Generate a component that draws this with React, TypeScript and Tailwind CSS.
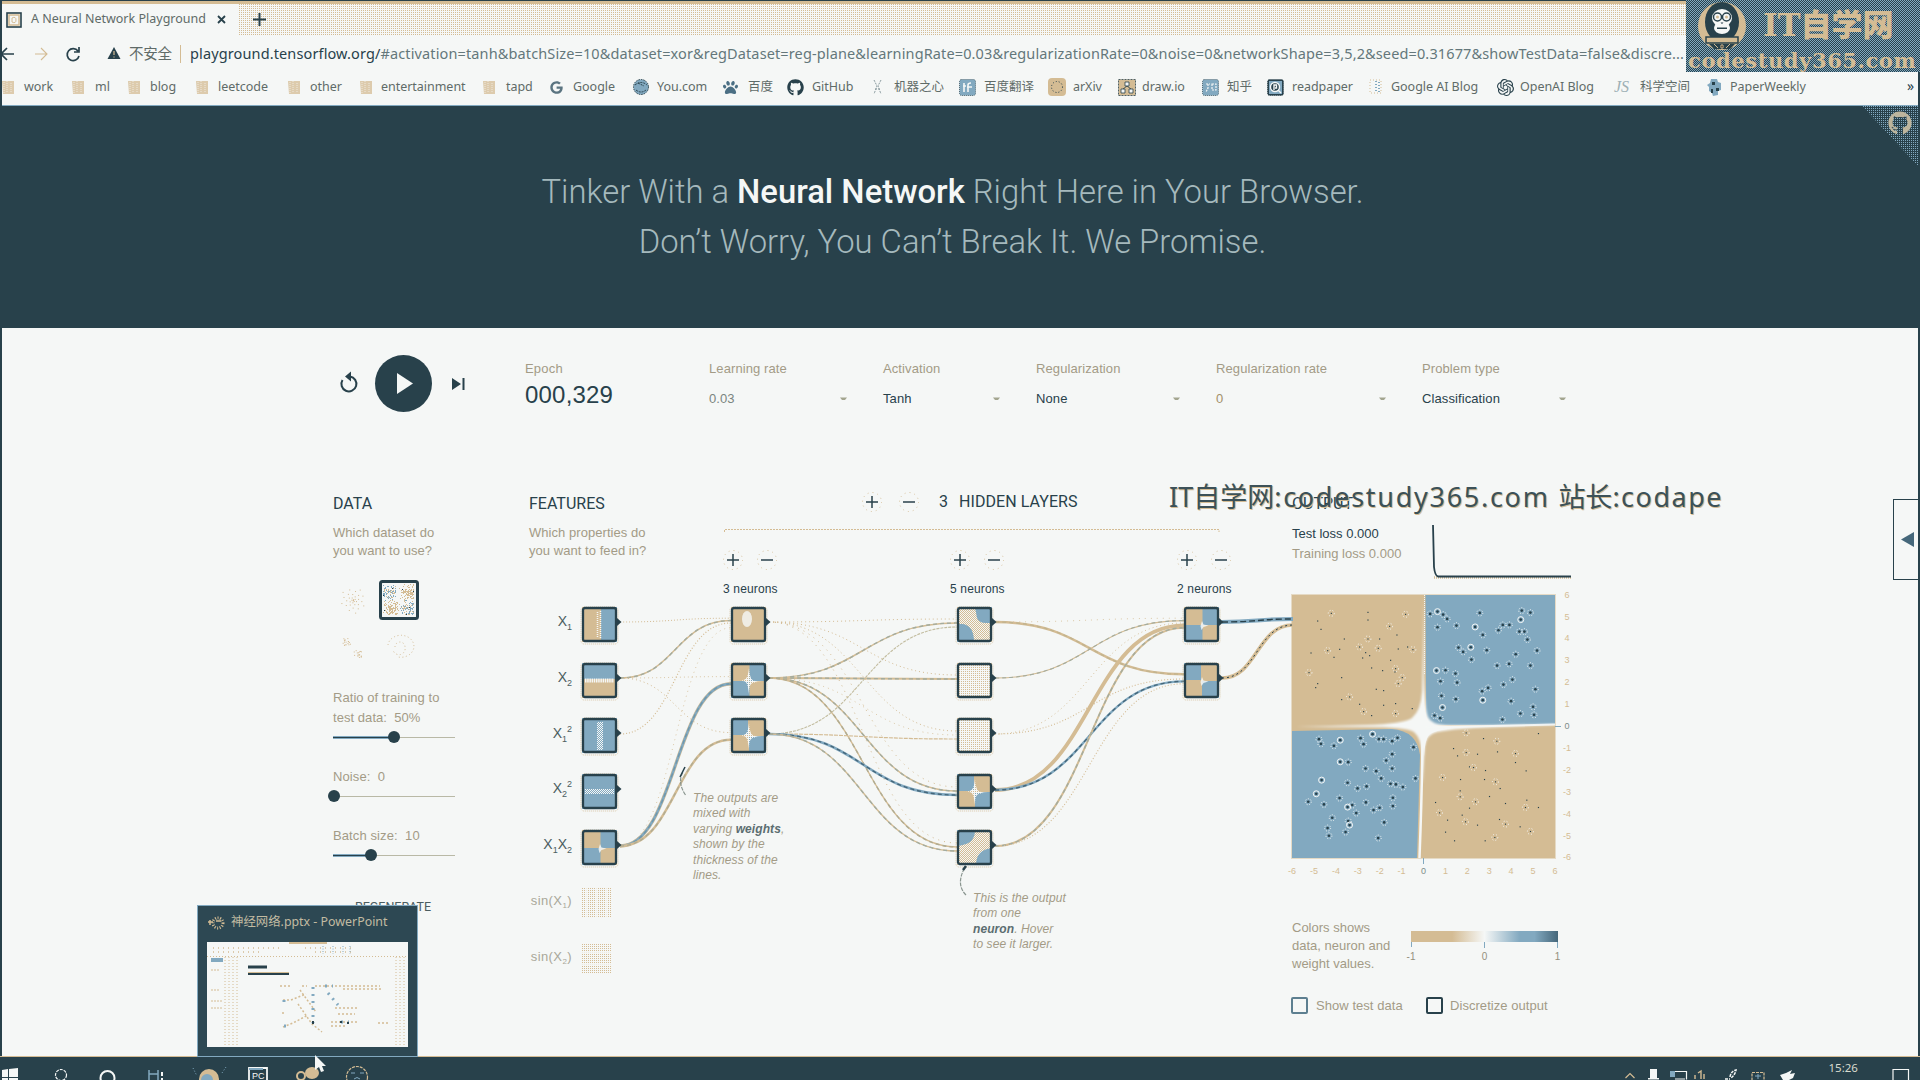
import React from "react";
import { FaGithub, FaPaw, FaGoogle } from "react-icons/fa";
import { SiOpenai } from "react-icons/si";

const DARK = "#28414b";
const TAN = "#d4bc94";
const BLUE = "#82a9c0";
const PALE = "#f5f7f6";

const UI = "font-['Noto_Sans','Noto_Sans_CJK_SC',sans-serif]";

/* ---------- browser chrome ---------- */

function FolderIcon() {
  return (
    <svg width="13" height="15" viewBox="0 0 13 15">
      <path d="M0 1h12v13H1z" fill={TAN} opacity="0.75" />
      <path d="M2 2v11M5 1v12M9 3v10" stroke={PALE} strokeWidth="0.7" strokeDasharray="1 1" />
    </svg>
  );
}

function SquareIcon({ fill, children }: { fill: string; children?: React.ReactNode }) {
  return (
    <svg width="17" height="17" viewBox="0 0 17 17">
      <rect x="0.5" y="0.5" width="16" height="16" rx="2" fill={fill} stroke={DARK} strokeWidth="0.7" strokeDasharray="1 1" />
      {children}
    </svg>
  );
}

const folder = <FolderIcon />;

const bookmarks: { w: string; iw: string; icon: React.ReactNode; label: string }[] = [
  { w: "w-[70px]", iw: "w-[22px]", icon: folder, label: "work" },
  { w: "w-[56px]", iw: "w-[23px]", icon: folder, label: "ml" },
  { w: "w-[68px]", iw: "w-[22px]", icon: folder, label: "blog" },
  { w: "w-[92px]", iw: "w-[22px]", icon: folder, label: "leetcode" },
  { w: "w-[72px]", iw: "w-[22px]", icon: folder, label: "other" },
  { w: "w-[123px]", iw: "w-[21px]", icon: folder, label: "entertainment" },
  { w: "w-[67px]", iw: "w-[23px]", icon: folder, label: "tapd" },
  { w: "w-[83px]", iw: "w-[23px]", icon: <FaGoogle size={13} color="#5a7480" />, label: "Google" },
  {
    w: "w-[90px]", iw: "w-[24px]", label: "You.com",
    icon: (
      <svg width="16" height="16" viewBox="0 0 16 16">
        <circle cx="8" cy="8" r="7.5" fill={BLUE} stroke={DARK} strokeDasharray="1.5 1" />
        <path d="M2 6q6-5 12 0M3 11q5 4 10 0M5 4l6 3" stroke={DARK} fill="none" strokeDasharray="2 1" />
      </svg>
    ),
  },
  { w: "w-[64px]", iw: "w-[25px]", icon: <FaPaw size={15} color="#4b6f84" />, label: "百度" },
  { w: "w-[86px]", iw: "w-[25px]", icon: <FaGithub size={17} color={DARK} />, label: "GitHub" },
  {
    w: "w-[86px]", iw: "w-[21px]", label: "机器之心",
    icon: (
      <svg width="10" height="16" viewBox="0 0 10 16" stroke="#8b9ca0" fill="none">
        <path d="M1 1l3 6-3 8M8 1L5 7l3 8M2 10h6" strokeDasharray="2 1" />
      </svg>
    ),
  },
  {
    w: "w-[89px]", iw: "w-[25px]", label: "百度翻译",
    icon: <SquareIcon fill={BLUE}><path d="M5 4v9M9 13V6q0-2 3-2M8 8h5M4 7h3" stroke={PALE} strokeWidth="1.6" fill="none" /></SquareIcon>,
  },
  {
    w: "w-[70px]", iw: "w-[25px]", label: "arXiv",
    icon: (
      <svg width="18" height="18" viewBox="0 0 18 18">
        <rect width="18" height="18" rx="4" fill={TAN} />
        <circle cx="9" cy="9" r="5.5" fill="none" stroke={DARK} strokeDasharray="1 2" />
      </svg>
    ),
  },
  {
    w: "w-[84px]", iw: "w-[24px]", label: "draw.io",
    icon: (
      <svg width="18" height="17" viewBox="0 0 18 17">
        <rect x="0.5" y="0.5" width="17" height="16" fill={TAN} stroke={DARK} strokeWidth="0.8" strokeDasharray="2 1" />
        <path d="M7 3h4v4H7zM3 10h4v4H3zM11 10h4v4h-4zM9 7L5 10M9 7l4 3" fill={PALE} stroke={DARK} strokeWidth="0.8" />
      </svg>
    ),
  },
  {
    w: "w-[65px]", iw: "w-[25px]", label: "知乎",
    icon: <SquareIcon fill={BLUE}><path d="M4 5h4M6 5v4l-2 4M10 5h4v6h-4z" stroke={PALE} strokeWidth="1.2" fill="none" strokeDasharray="2 1" /></SquareIcon>,
  },
  {
    w: "w-[102px]", iw: "w-[25px]", label: "readpaper",
    icon: <SquareIcon fill={DARK}><rect x="2" y="2" width="13" height="13" fill={BLUE} /><circle cx="8" cy="8" r="4.5" fill={DARK} stroke={PALE} strokeWidth="1.4" /><path d="M7 11V6h2.500v3H8M11 11l3 3" stroke={PALE} strokeWidth="1.4" fill="none" /></SquareIcon>,
  },
  {
    w: "w-[128px]", iw: "w-[22px]", label: "Google AI Blog",
    icon: (
      <svg width="14" height="16" viewBox="0 0 14 16" fill="none" strokeDasharray="1 2">
        <rect x="1" y="1" width="11" height="13" stroke={TAN} />
        <path d="M7 2v12M10 3v10" stroke={BLUE} strokeWidth="2" />
      </svg>
    ),
  },
  { w: "w-[117px]", iw: "w-[23px]", icon: <SiOpenai size={17} color={DARK} />, label: "OpenAI Blog" },
  { w: "w-[93px]", iw: "w-[26px]", icon: <span className="font-['Liberation_Serif'] text-[16px] italic text-[#9db0b5]">JS</span>, label: "科学空间" },
  {
    w: "w-[110px]", iw: "w-[23px]", label: "PaperWeekly",
    icon: (
      <svg width="14" height="17" viewBox="0 0 14 17">
        <path d="M4 0h6l1 3 3 1v7l-3 1v4l-5 1-1-3-3-2V8L0 6l3-2z" fill={BLUE} />
        <path d="M5 3h3v3H5zM9 9h3v3H9zM4 10h2v4H4z" fill={DARK} />
      </svg>
    ),
  },
];

function Toolbar() {
  return (
    <div className="flex h-[38px] items-center">
      <svg width="127" height="20" viewBox="2 0 127 20" fill="none" className="shrink-0">
        <path d="M14 10H1M7 4L1 10l6 6" stroke={DARK} strokeWidth="1.700" />
        <path d="M35 10h12M41 4l6 6-6 6" stroke={TAN} strokeWidth="1.100" />
        <path d="M78 7a6 6 0 1 0 1 5M79 3v5h-5" stroke={DARK} strokeWidth="1.700" />
        <path d="M114 3l6.500 12h-13z" fill={DARK} />
        <path d="M114 7v4M114 12.500v1" stroke={TAN} strokeWidth="1.200" />
      </svg>
      <span className="w-[51px] shrink-0 text-[14.500px] tracking-[-0.2px]">不安全</span>
      <span className="mr-[9px] h-[18px] w-px shrink-0 bg-[#d4bc94]" />
      <span className="w-[1496px] overflow-hidden whitespace-nowrap text-[14.500px] tracking-[0.126px] text-[#64777b]">
        <span className="text-[#28414b]">playground.tensorflow.org/</span>
        #activation=tanh&amp;batchSize=10&amp;dataset=xor&amp;regDataset=reg-plane&amp;learningRate=0.03&amp;regularizationRate=0&amp;noise=0&amp;networkShape=3,5,2&amp;seed=0.31677&amp;showTestData=false&amp;discre...
      </span>
    </div>
  );
}

function Browser() {
  return (
    <header className={"flex h-[106px] shrink-0 flex-col bg-[#f5f7f6] text-[#5f6b68] " + UI}>
      <div className="h-px bg-[#28414b]" />
      <div className="h-[3px] bg-[#d4bc94]" />
      <div className="flex h-[31px]">
        <div className="flex w-[236px] shrink-0 items-center pl-[4px]">
          <svg width="16" height="16" viewBox="0 0 16 16" className="shrink-0">
            <rect x="1" y="1" width="14" height="14" fill={PALE} stroke={DARK} strokeWidth="1.6" />
            <rect x="3" y="3" width="10" height="10" fill="none" stroke={TAN} strokeWidth="1.5" />
            <path d="M6 6q4-2 4 2t-4 2z" fill="none" stroke={TAN} />
          </svg>
          <span className="ml-[9px] w-[186px] shrink-0 whitespace-nowrap text-[12.500px]">A Neural Network Playground</span>
          <svg width="9" height="9" viewBox="0 0 9 9" stroke={DARK} strokeWidth="1.8"><path d="M1 1l7 7M8 1L1 8" /></svg>
        </div>
        <div className="flex grow items-center bg-[conic-gradient(#d4bc94_25%,#f5f7f6_0)] bg-[length:2px_2px] pl-[15px]">
          <svg width="13" height="13" viewBox="0 0 13 13" stroke={DARK} strokeWidth="2"><path d="M6.500 0v13M0 6.500h13" /></svg>
        </div>
      </div>
      <Toolbar />
      <div className="flex h-[28px] items-center text-[12.500px] tracking-[-0.03px]">
        {bookmarks.map((b) => (
          <div key={b.label} className={"flex shrink-0 items-center whitespace-nowrap " + b.w}>
            <span className={"flex shrink-0 items-center " + b.iw}>{b.icon}</span>
            <span>{b.label}</span>
          </div>
        ))}
        <span className="ml-auto pb-[4px] pr-[4px] text-[14px] text-[#28414b]">»</span>
      </div>
      <div className="mt-auto h-px bg-[#82a9c0]" />
    </header>
  );
}

function SiteLogo() {
  return (
    <div className="absolute right-0 top-0 flex h-[72px] w-[234px] flex-col overflow-hidden bg-[repeating-conic-gradient(#28414b_0_25%,#82a9c0_0_50%)] bg-[length:2px_2px] text-[#d4bc94]">
      <div className="flex h-[50px] items-center pl-[11px]">
        <svg width="50" height="50" viewBox="0 0 50 50">
          <ellipse cx="25" cy="26" rx="24" ry="24" fill={TAN} />
          <ellipse cx="25" cy="22" rx="17" ry="20" fill={DARK} />
          <ellipse cx="25" cy="18" rx="10" ry="9" fill={PALE} />
          <ellipse cx="25" cy="28" rx="8" ry="6" fill={PALE} />
          <circle cx="20.500" cy="17" r="4" fill={PALE} stroke={DARK} strokeWidth="1.500" />
          <circle cx="29.500" cy="17" r="4" fill={PALE} stroke={DARK} strokeWidth="1.500" />
          <circle cx="20.500" cy="17" r="1.500" fill={TAN} />
          <circle cx="29.500" cy="17" r="1.500" fill={TAN} />
          <path d="M23.500 22.500h3l-1.500 1.500zM20 27.500h10v1.500H20z" fill={DARK} />
          <path d="M9 37h32v6H9z" fill={TAN} stroke={DARK} strokeWidth="1.500" />
          <path d="M12 44h26l-5 5H17z" fill={DARK} />
          <path d="M17 44l4 4M33 44l-4 4M24 45h2v3h-2z" stroke={TAN} />
        </svg>
        <span className="ml-[16px] whitespace-nowrap font-['DejaVu_Serif','Noto_Sans_CJK_SC',serif] text-[31px] font-black leading-[50px]">IT自学网</span>
      </div>
      <div className="whitespace-nowrap pl-[2px] font-['DejaVu_Serif',serif] text-[21px] font-bold leading-[22px] tracking-[0.600px]">codestudy365.com</div>
    </div>
  );
}

function Banner() {
  return (
    <section className="relative flex h-[222px] shrink-0 flex-col items-center bg-[#28414b] pr-[15px] pt-[61px] font-['Roboto',sans-serif] text-[32.800px] font-light leading-[50px] text-[#a5b9bd]">
      <div className="whitespace-nowrap">Tinker With a <span className="font-medium text-[#f5f7f6]">Neural Network</span> Right Here in Your Browser.</div>
      <div className="whitespace-nowrap">Don’t Worry, You Can’t Break It. We Promise.</div>
      <div className="absolute right-0 top-0 h-[60px] w-[56px]">
        <div className="h-full w-full bg-[conic-gradient(#82a9c0_25%,#28414b_0)] bg-[length:2px_2px] [clip-path:polygon(0_0,100%_0,100%_100%)]" />
        <FaGithub size={24} color="#bdb59d" className="absolute right-[6px] top-[5px]" />
      </div>
    </section>
  );
}

/* ---------- playground ---------- */

const selects = [
  { w: "w-[174px]", cw: "w-[138px]", label: "Learning rate", value: "0.03", cls: "text-[#7a8580]" },
  { w: "w-[153px]", cw: "w-[117px]", label: "Activation", value: "Tanh", cls: "text-[#28414b]" },
  { w: "w-[180px]", cw: "w-[144px]", label: "Regularization", value: "None", cls: "text-[#28414b]" },
  { w: "w-[206px]", cw: "w-[170px]", label: "Regularization rate", value: "0", cls: "text-[#a3906a]" },
  { w: "w-[160px]", cw: "w-[144px]", label: "Problem type", value: "Classification", cls: "text-[#28414b]" },
];

function Controls() {
  return (
    <div className="flex h-[66px] shrink-0 items-center">
      <svg width="195" height="66" viewBox="330 350 195 66" className="shrink-0">
        <path d="M342.500 380A7.500 7.500 0 1 0 350 376.500" fill="none" stroke={DARK} strokeWidth="2" />
        <path d="M351 371.500v10l-6-5z" fill={DARK} />
        <circle cx="403.500" cy="383.500" r="28.500" fill={DARK} />
        <path d="M397 373v21l16-10.500z" fill={PALE} />
        <path d="M452 378v12l9-6zM462.500 378h2v12h-2z" fill={DARK} />
      </svg>
      <div className="w-[184px] shrink-0 pt-[4px]">
        <div className="text-[13px] leading-[16px] tracking-[0.200px]">Epoch</div>
        <div className="mt-[4px] text-[24px] leading-[28px] tracking-[0.200px] text-[#28414b]">000,329</div>
      </div>
      {selects.map((s) => (
        <div key={s.label} className={"h-[48px] shrink-0 pt-[2px] text-[13px] " + s.w}>
          <div className="whitespace-nowrap leading-[16px] tracking-[0.100px]">{s.label}</div>
          <div className={"mt-[14px] flex items-center justify-between leading-[16px] tracking-[0.100px] " + s.cw + " " + s.cls}>
            <span>{s.value}</span>
            <svg width="7" height="4" viewBox="0 0 7 4"><path d="M0 0.500h7l-2 2.500h-3z" fill="#a3a58f" /></svg>
          </div>
        </div>
      ))}
    </div>
  );
}

const scatter = (n: number, fn: (i: number) => [number, number]) => Array.from({ length: n }, (_, i) => fn(i));
const noise = (i: number) => {
  const v = Math.sin(i * 127.1 + 11.7) * 43758.5453;
  return v - Math.floor(v);
};

const XOR_CENTERS: [number, number][] = [[29, 12], [12, 27], [10, 12], [29, 28]];

function Slider({ fill, at }: { fill: string; at: string }) {
  return (
    <div className="relative mt-[3px] flex h-[12px] w-[122px] items-center">
      <div className={"h-[3px] border-y border-[#82a9c0] bg-[#28414b] " + fill} />
      <div className="h-px grow bg-[#b9b9a6]" />
      <div className={"absolute top-0 h-[12px] w-[12px] rounded-full bg-[#28414b] " + at} />
    </div>
  );
}

function DataColumn() {
  return (
    <div className="w-[195px] shrink-0 pt-[14px] text-[13px]">
      <h2 className="font-['Roboto',sans-serif] text-[16px] leading-[20px] text-[#28414b]">DATA</h2>
      <p className="mt-[10px] leading-[18px] tracking-[0.050px]">Which dataset do<br />you want to use?</p>
      <div className="-ml-px mt-[20px] grid w-[88px] grid-cols-[40px_40px] gap-[7px]">
        <svg width="40" height="40" viewBox="0 0 40 40" fill={TAN}>
          {scatter(34, (i) => [21 + Math.cos(i * 2.4) * i * 0.4, 20 + Math.sin(i * 2.4) * i * 0.4]).map(([x, y], i) => (
            <rect key={i} x={x} y={y} width="1" height="1" />
          ))}
        </svg>
        <svg width="40" height="40" viewBox="0 0 40 40">
          <rect x="1.500" y="1.500" width="37" height="37" rx="2" fill={PALE} stroke={DARK} strokeWidth="3" />
          {scatter(420, (i) => {
            const c = XOR_CENTERS[i % 4];
            return [c[0] + (noise(i) + noise(i + 77) - 1) * 9, c[1] + (noise(i + 500) + noise(i + 900) - 1) * 9];
          }).map(([x, y], i) => (
            <rect
              key={i}
              x={Math.round(Math.min(34, Math.max(4, x)))}
              y={Math.round(Math.min(34, Math.max(4, y)))}
              width="1"
              height="1"
              fill={i % 53 === 0 ? DARK : i % 4 < 2 || i % 3 === 0 ? TAN : i % 5 === 0 ? PALE : BLUE}
            />
          ))}
        </svg>
        <svg width="40" height="40" viewBox="0 0 40 40" fill={TAN}>
          {scatter(34, (i) => [(i % 2 ? 12 : 23) + noise(i) * 8 - 2, (i % 2 ? 12 : 24) + noise(i + 90) * 7 - 1]).map(([x, y], i) => (
            <rect key={i} x={x} y={y} width="1" height="1" />
          ))}
        </svg>
        <svg width="40" height="40" viewBox="0 0 40 40" fill="none" stroke={TAN} strokeDasharray="1 2.500">
          <path d="M9 18a13 11 0 1 1 10 12M16 20a5 5 0 0 1 10 0 6 6 0 0 1-12 3" />
        </svg>
      </div>
      <p className="mt-[21px] leading-[20px] tracking-[0.050px]">Ratio of training to<br />test data:&nbsp; 50%</p>
      <Slider fill="w-[61px]" at="left-[55px]" />
      <p className="mt-[24px] leading-[20px] tracking-[0.100px]">Noise:&nbsp; 0</p>
      <Slider fill="w-0" at="-left-[5px]" />
      <p className="mt-[24px] leading-[20px] tracking-[0.100px]">Batch size:&nbsp; 10</p>
      <Slider fill="w-[38px]" at="left-[32px]" />
      <div className="ml-[5px] mt-[34px] w-[110px] text-center font-['Roboto',sans-serif] text-[12.500px] leading-[24px] text-[#4b5d60]">REGENERATE</div>
    </div>
  );
}

type Fill = "x" | "y" | "x2" | "y2" | "xor" | "rox" | "blob" | "mixA" | "mixB" | "faint";

function Star({ small }: { small?: boolean }) {
  return small ? (
    <path d="M18 14l1.500 3.500 5 1-5 1.500-2 3-1-4z" fill={PALE} opacity="0.85" />
  ) : (
    <path d="M18 5q0.500 9 3 11.500T31 18.500Q22 19 20 21t-2 10Q17 23 15.500 20T6 18q7-0.500 9-2.500T18 5z" fill="url(#starDots)" />
  );
}

function NodeBox({ x, y, kind, small }: { x: number; y: number; kind: Fill; small?: boolean }) {
  return (
    <g transform={`translate(${x} ${y})`}>
      <rect x="-1" y="0" width="37" height="37" rx="3" fill="none" stroke={TAN} strokeWidth="0.800" strokeDasharray="1 1" />
      {kind === "x" && <><rect width="35" height="35" fill={TAN} /><rect x="19" width="16" height="35" fill={BLUE} /><path d="M15.500 5v26M18.500 4v27" stroke={PALE} strokeWidth="1.500" strokeDasharray="1 1" /></>}
      {kind === "y" && <><rect width="35" height="35" fill={TAN} /><rect width="35" height="16" fill={BLUE} /><path d="M3 16.500h29M3 18.500h29" stroke={PALE} strokeWidth="1.800" strokeDasharray="1.500 0.700" /></>}
      {kind === "x2" && <><rect width="35" height="35" fill={BLUE} /><path d="M15 4h6v28h-6z" fill="url(#dither)" /></>}
      {kind === "y2" && <><rect width="35" height="35" fill={BLUE} /><path d="M3 15h29v5H3z" fill="url(#dither)" /></>}
      {kind === "xor" && <><rect width="35" height="35" fill={TAN} /><path d="M18.500 0H35v18H18.500zM0 18h18.500v17H0z" fill={BLUE} /></>}
      {kind === "rox" && <><rect width="35" height="35" fill={TAN} /><path d="M0 0h17v17H0zM18 18h17v17H18z" fill={BLUE} /></>}
      {kind === "blob" && <><rect width="35" height="35" fill={TAN} /><ellipse cx="16" cy="12" rx="5" ry="8" fill={PALE} opacity="0.8" /></>}
      {kind === "mixA" && <><rect width="35" height="35" fill="url(#speck)" /><path d="M18 0H35v16h-6q-7 0-9-5zM0 17h6q11 2 11 18H0z" fill={BLUE} /></>}
      {kind === "mixB" && <><rect width="35" height="35" fill="url(#speck)" /><path d="M0 0h18q0 8-5 12-5 3-13 4zM35 18v17H19q0-15 16-17z" fill={BLUE} /></>}
      {kind === "faint" && <rect width="35" height="35" fill="url(#speckLight)" />}
      {(kind === "xor" || kind === "rox") && <Star small={small} />}
      <rect x="1" y="1" width="33" height="33" rx="2" fill="none" stroke={DARK} strokeWidth="2.300" />
      <path d="M35 11l4.500 4-4.500 4z" fill={DARK} />
    </g>
  );
}

const ROWS = [622, 678, 734, 790, 846];
const COLS = [582, 731, 957, 1184];
const OFFS: Record<number, number> = { 5: 2.4, 3: 4 };

function Link({ c, from, to, n, color, w, dash, over }: { c: number; from: number; to: number; n: number; color: string; w: number; dash?: string; over?: string }) {
  const x1 = COLS[c] + 38;
  const y1 = ROWS[from];
  const x2 = COLS[c + 1];
  const y2 = ROWS[to] + (from - (n - 1) / 2) * OFFS[n] + 1;
  const m = (x1 + x2) / 2;
  const d = `M${x1} ${y1}C${m} ${y1} ${m} ${y2} ${x2} ${y2}`;
  return (
    <>
      <path d={d} fill="none" stroke={color} strokeWidth={w} strokeDasharray={dash} />
      {over && <path d={d} fill="none" stroke={over} strokeWidth={Math.min(w, 1.4)} strokeDasharray="4 3" />}
    </>
  );
}

const dot = "1 3";

function Links() {
  return (
    <g>
      <Link c={0} from={0} to={0} n={5} color={TAN} w={1} dash="1 2" />
      <Link c={0} from={1} to={0} n={5} color={TAN} w={1.5} over="#a3ac9f" />
      <Link c={0} from={2} to={0} n={5} color={TAN} w={1.2} dash="1 2" />
      <Link c={0} from={4} to={0} n={5} color={TAN} w={0.8} dash="1 4" />
      <Link c={0} from={1} to={1} n={5} color={TAN} w={0.8} dash={dot} />
      <Link c={0} from={1} to={2} n={5} color={TAN} w={1} dash={dot} />
      <Link c={0} from={4} to={1} n={5} color={TAN} w={3.4} />
      <Link c={0} from={4} to={1} n={5} color={BLUE} w={2.4} over="#6f97ab" />
      <Link c={0} from={4} to={2} n={5} color={TAN} w={2.4} over="#b0ac92" />

      {[0, 1, 2, 3, 4].map((t) => (
        <Link key={t} c={1} from={0} to={t} n={3} color={TAN} w={1} dash={t > 2 ? "1 5" : dot} />
      ))}
      <Link c={1} from={1} to={0} n={3} color={TAN} w={1.5} over="#a3ac9f" />
      <Link c={1} from={1} to={1} n={3} color={TAN} w={1.8} over="#a3ac9f" />
      <Link c={1} from={1} to={2} n={3} color={TAN} w={0.8} dash="1 4" />
      <Link c={1} from={1} to={3} n={3} color={TAN} w={1.4} over="#a3ac9f" />
      <Link c={1} from={1} to={4} n={3} color={TAN} w={1.4} over="#b0ac92" />
      <Link c={1} from={2} to={0} n={3} color="#c3bda0" w={1.1} dash="3 1" />
      <Link c={1} from={2} to={2} n={3} color={TAN} w={1.2} dash="4 1" />
      <Link c={1} from={2} to={3} n={3} color={BLUE} w={2.6} over="#45677a" />
      <Link c={1} from={2} to={4} n={3} color={TAN} w={1.4} over="#a3ac9f" />

      <Link c={2} from={0} to={0} n={5} color={TAN} w={0.8} dash="1 5" />
      <Link c={2} from={0} to={1} n={5} color={TAN} w={2.4} over="#c2b48f" />
      <Link c={2} from={1} to={0} n={5} color={TAN} w={1.1} over="#a3ac9f" />
      <Link c={2} from={2} to={0} n={5} color={TAN} w={0.9} dash={dot} />
      <Link c={2} from={2} to={1} n={5} color={TAN} w={1.1} dash="1 2" />
      <Link c={2} from={3} to={0} n={5} color={TAN} w={3.8} />
      <Link c={2} from={3} to={1} n={5} color={BLUE} w={2.4} over="#45677a" />
      <Link c={2} from={4} to={0} n={5} color={TAN} w={2} over="#a3ac9f" />
      <Link c={2} from={4} to={1} n={5} color={TAN} w={1.1} dash="1 2" />

      <path d="M1222 622C1257 622 1257 619 1293 619" fill="none" stroke={BLUE} strokeWidth="4" />
      <path d="M1222 622C1257 622 1257 619 1293 619" fill="none" stroke={DARK} strokeWidth="1.400" strokeDasharray="6 3" />
      <path d="M1222 678C1257 678 1257 625 1293 625" fill="none" stroke={TAN} strokeWidth="3.600" />
      <path d="M1222 678C1257 678 1257 625 1293 625" fill="none" stroke={DARK} strokeWidth="1" strokeDasharray="2 3" />
    </g>
  );
}

function PlusMinus({ gap }: { gap: string }) {
  return (
    <span className={"flex " + gap}>
      <svg width="22" height="22" viewBox="-11 -11 22 22">
        <circle r="9.500" fill="none" stroke={TAN} strokeWidth="0.900" strokeDasharray="1 4" />
        <path d="M-6 0H6M0-6V6" stroke={DARK} strokeWidth="1.500" />
      </svg>
      <svg width="22" height="22" viewBox="-11 -11 22 22">
        <circle r="9.500" fill="none" stroke={TAN} strokeWidth="0.900" strokeDasharray="1 4" />
        <path d="M-6 0H6" stroke={DARK} strokeWidth="1.500" />
      </svg>
    </span>
  );
}

function FeatureLabel({ y, children }: { y: number; children: React.ReactNode }) {
  return <text x="572" y={y} textAnchor="end">{children}</text>;
}

function Network() {
  return (
    <div className="relative h-[510px] w-[764px] shrink-0">
      <svg width="764" height="510" viewBox="528 480 764 510" className="absolute left-0 top-0 overflow-visible">
        <defs>
          <pattern id="dither" width="2" height="2" patternUnits="userSpaceOnUse"><rect width="2" height="2" fill={BLUE} /><path d="M0 0h1v1H0zM1 1h1v1H1z" fill={PALE} /></pattern>
          <pattern id="starDots" width="2" height="2" patternUnits="userSpaceOnUse"><path d="M0 0h2v1H0zM1 1h1v1H1z" fill={PALE} /></pattern>
          <pattern id="speck" width="2" height="2" patternUnits="userSpaceOnUse"><rect width="2" height="2" fill={PALE} /><path d="M0 0h1v1H0zM1 1h1v1H1z" fill={TAN} /></pattern>
          <pattern id="speckLight" width="2" height="2" patternUnits="userSpaceOnUse"><rect width="2" height="2" fill={PALE} /><path d="M0 0h1v1H0z" fill={TAN} /></pattern>
        </defs>
        <path d="M724.500 532v-2.500h494.500v2.500" fill="none" stroke={TAN} strokeDasharray="2 1" />
        <Links />
        <NodeBox x={582} y={607} kind="x" />
        <NodeBox x={582} y={663} kind="y" />
        <NodeBox x={582} y={718} kind="x2" />
        <NodeBox x={582} y={774} kind="y2" />
        <NodeBox x={582} y={830} kind="xor" small />
        <NodeBox x={731} y={607} kind="blob" />
        <NodeBox x={731} y={663} kind="xor" />
        <NodeBox x={731} y={718} kind="rox" />
        <NodeBox x={957} y={607} kind="mixA" />
        <NodeBox x={957} y={663} kind="faint" />
        <NodeBox x={957} y={718} kind="faint" />
        <NodeBox x={957} y={774} kind="rox" />
        <NodeBox x={957} y={830} kind="mixB" />
        <NodeBox x={1184} y={607} kind="xor" small />
        <NodeBox x={1184} y={663} kind="rox" small />
        <rect x="582" y="887" width="30" height="30" fill="url(#speckLight)" />
        <rect x="582" y="943" width="30" height="30" fill="url(#speckLight)" />
        <path d="M587 886v32M597 886v32M607 886v32M581 952h32M581 965h32" stroke={PALE} strokeWidth="1.500" />
        <g fontSize="14" fill="#4b5d60" className="font-['Liberation_Sans',sans-serif]">
          <FeatureLabel y={626}>X<tspan fontSize="9" dy="4">1</tspan></FeatureLabel>
          <FeatureLabel y={682}>X<tspan fontSize="9" dy="4">2</tspan></FeatureLabel>
          <FeatureLabel y={738}>X<tspan fontSize="9" dy="4">1</tspan><tspan fontSize="9" dy="-10">2</tspan></FeatureLabel>
          <FeatureLabel y={793}>X<tspan fontSize="9" dy="4">2</tspan><tspan fontSize="9" dy="-10">2</tspan></FeatureLabel>
          <FeatureLabel y={849}>X<tspan fontSize="9" dy="4">1</tspan><tspan dy="-4">X</tspan><tspan fontSize="9" dy="4">2</tspan></FeatureLabel>
          <g fill="#a9a799" fontSize="13" letterSpacing="0.4">
            <FeatureLabel y={905}>sin(X<tspan fontSize="8" dy="3">1</tspan><tspan dy="-3">)</tspan></FeatureLabel>
            <FeatureLabel y={961}>sin(X<tspan fontSize="8" dy="3">2</tspan><tspan dy="-3">)</tspan></FeatureLabel>
          </g>
        </g>
        <g fill="none" stroke="#8a9690" strokeWidth="1.200">
          <path d="M685.500 795Q677 782 683 772" strokeDasharray="4 1" />
          <path d="M680 777l5-10" stroke={DARK} strokeWidth="1.600" />
          <path d="M966 895Q956 885 964 869" strokeDasharray="4 1" />
          <path d="M963 870l3-4" stroke={DARK} strokeWidth="2.500" />
        </g>
      </svg>

      <div className="relative flex pt-[14px]">
        <div className="w-[195px] shrink-0 pl-px text-[13px]">
          <h2 className="font-['Roboto',sans-serif] text-[16px] leading-[20px] text-[#28414b]">FEATURES</h2>
          <p className="mt-[10px] leading-[18px] tracking-[0.050px]">Which properties do<br />you want to feed in?</p>
        </div>
        <div className="w-[569px] shrink-0 text-[#28414b]">
          <div className="-mt-[3px] flex h-[22px] items-center pl-[138px] font-['Roboto',sans-serif] text-[16px]">
            <PlusMinus gap="gap-[15px]" />
            <span className="ml-[19px] w-[20px]">3</span>
            <span className="whitespace-nowrap tracking-[0.060px]">HIDDEN LAYERS</span>
          </div>
          <div className="mt-[36px] flex">
            {["3 neurons", "5 neurons", "2 neurons"].map((t) => (
              <div key={t} className="w-[227px] shrink-0">
                <div className="-ml-px"><PlusMinus gap="gap-[12px]" /></div>
                <div className="mt-[9px] text-[12px] leading-[18px] tracking-[0.150px]">{t}</div>
              </div>
            ))}
          </div>
        </div>
      </div>

      <p className="absolute left-[165px] top-[311px] whitespace-nowrap text-[12px] italic leading-[15.400px] tracking-[0.080px]">
        The outputs are<br />mixed with<br />varying <b className="text-[#5b6d70]">weights</b>,<br />shown by the<br />thickness of the<br />lines.
      </p>
      <p className="absolute left-[445px] top-[411px] whitespace-nowrap text-[12px] italic leading-[15.400px] tracking-[0.080px]">
        This is the output<br />from one<br /><b className="text-[#5b6d70]">neuron</b>. Hover<br />to see it larger.
      </p>
    </div>
  );
}

const bluePoints: [number, number][] = [
  [532, 124], [549, 133], [561, 146], [510, 131], [532, 171], [589, 166], [659, 128], [645, 170], [668, 194], [728, 164], [748, 164], [715, 180], [785, 121], [811, 127], [782, 148], [778, 184], [793, 184], [802, 208], [831, 241], [767, 252], [680, 240], [632, 231], [595, 232], [609, 245], [634, 268], [711, 286], [747, 281], [811, 286], [529, 301], [556, 300], [586, 310], [541, 333], [591, 337], [544, 377], [587, 387], [547, 412], [523, 436], [540, 444], [730, 343], [757, 328], [684, 353], [666, 363], [668, 390], [753, 393], [826, 357], [781, 430], [819, 410], [822, 434], [727, 448],
  [337, 492], [356, 507], [370, 507], [412, 503], [396, 513], [301, 504], [310, 522], [240, 510], [176, 507], [182, 521], [221, 527], [460, 531], [396, 552], [378, 571], [240, 575], [264, 576], [316, 595], [348, 603], [396, 595], [363, 625], [466, 625], [184, 630], [262, 638], [319, 649], [292, 655], [391, 641], [407, 643], [428, 651], [168, 671], [238, 684], [144, 695], [191, 703], [398, 683], [398, 708], [317, 697], [262, 711], [276, 705], [340, 720], [358, 713], [288, 729], [216, 743], [264, 753], [268, 765], [256, 786], [372, 757], [202, 774], [206, 797], [354, 804],
];
const tanPoints: [number, number][] = [
  [213, 129], [323, 126], [323, 149], [436, 132], [172, 152], [182, 177], [388, 168], [410, 194], [252, 206], [323, 206], [358, 206], [152, 248], [202, 241], [238, 237], [221, 261], [298, 230], [316, 247], [328, 256], [354, 234], [414, 236], [442, 230], [458, 238], [391, 270], [307, 263], [146, 307], [334, 293], [367, 301], [406, 295], [404, 305], [244, 322], [426, 322], [172, 340], [166, 352], [414, 340], [348, 357], [370, 361], [268, 380], [244, 388], [298, 402], [310, 424], [370, 405], [406, 400], [406, 430], [456, 415], [334, 436],
  [618, 488], [835, 490], [670, 505], [710, 513], [580, 535], [592, 557], [618, 547], [652, 552], [712, 545], [766, 550], [766, 577], [628, 590], [640, 592], [676, 601], [798, 602], [547, 622], [601, 628], [673, 628], [706, 635], [720, 655], [600, 662], [600, 680], [688, 679], [526, 697], [646, 695], [736, 700], [800, 690], [796, 712], [835, 712], [628, 714], [538, 728], [606, 735], [562, 750], [616, 755], [652, 765], [718, 748], [736, 762], [780, 770], [556, 786], [811, 784], [583, 812], [675, 812], [704, 802],
];

function Heatmap() {
  const ticks = [-6, -5, -4, -3, -2, -1, 0, 1, 2, 3, 4, 5, 6];
  return (
    <svg width="300" height="300" viewBox="1285 585 300 300" className="-ml-[7px] block">
      <defs>
        <filter id="soft" x="-20%" y="-20%" width="140%" height="140%"><feGaussianBlur stdDeviation="1.200" /></filter>
        <clipPath id="area"><rect x="1292" y="595" width="263" height="263" /></clipPath>
      </defs>
      <g clipPath="url(#area)">
        <rect x="1292" y="595" width="263" height="263" fill={TAN} />
        <path d="M1425.500 595H1555v130H1432q-5-3-6-12z" fill={BLUE} />
        <path d="M1292 731l100-2q25 2 28 26l-3 103h-125z" fill={BLUE} />
        <path d="M1424 596q-1 60-2 96-1 18-10 26-9 6-46 7l-70 2h70q40 0 48 5 7 6 8 22l1 30q1-30 2-38 2-12 12-14 16-3 38-4l80-3v-1q-80 2-110 1-14-1-17-8-3-8-4-40z" fill={PALE} filter="url(#soft)" />
        <path d="M1423 690q0 20-7 28-6 6-30 7 26 0 32 6 6 8 6 26 1-18 5-22 5-5 27-7-22 1-27-5-5-6-6-33z" fill={PALE} />
        <path d="M1419.500 858q3-80 3-130" fill="none" stroke={PALE} strokeWidth="2.500" />
        <path d="M1425 727.500l130-3" fill="none" stroke={PALE} strokeWidth="2" opacity="0.9" />
        <path d="M1424.500 595v80" fill="none" stroke={PALE} strokeWidth="1" strokeDasharray="1 1" />
      </g>
      <rect x="1291.500" y="594.500" width="264" height="264" fill="none" stroke={TAN} strokeDasharray="1 1" />
      <path d="M1423.500 858v6M1555 726.500h6" stroke={BLUE} />
      <g transform="translate(1260.330 570.330) scale(0.333)">
        {bluePoints.map(([x, y], i) => (
          <g key={i}>
            <circle cx={x} cy={y} r="9" fill="none" stroke={PALE} strokeWidth="3" strokeDasharray={i % 7 === 0 ? undefined : "3 5"} />
            <circle cx={x} cy={y} r="4" fill={DARK} />
          </g>
        ))}
        {tanPoints.map(([x, y], i) => (
          <g key={i}>
            <rect x={x - 1.5} y={y - 1.5} width="3.500" height="3.500" fill={DARK} />
            {i % 3 === 0 && <circle cx={x} cy={y} r="9" fill="none" stroke={PALE} strokeWidth="3" strokeDasharray="3 6" />}
          </g>
        ))}
      </g>
      <g fontSize="9" textAnchor="middle" className="font-['Liberation_Sans',sans-serif]">
        {ticks.map((t) => (
          <React.Fragment key={t}>
            <text x={1423.5 + t * 21.9} y="873.500" fill={t === 0 ? "#7d8c88" : TAN}>{t}</text>
            <text x="1567" y={729 - t * 21.9} fill={t === 0 ? "#7d8c88" : TAN}>{t}</text>
          </React.Fragment>
        ))}
      </g>
    </svg>
  );
}

function OutputColumn() {
  return (
    <div className="w-[300px] shrink-0 pt-[14px] text-[13px]">
      <h2 className="font-['Roboto',sans-serif] text-[16px] leading-[20px] text-[#28414b]">OUTPUT</h2>
      <div className="mt-[10px] flex h-[61px]">
        <div className="w-[138px] shrink-0 whitespace-nowrap leading-[20px]">
          <div className="text-[#28414b]">Test loss 0.000</div>
          <div>Training loss 0.000</div>
        </div>
        <svg width="145" height="61" viewBox="1430 524 145 61" fill="none">
          <path d="M1434 577.500h137" stroke={TAN} strokeWidth="2.500" strokeDasharray="1 1" />
          <path d="M1433 525l1 42q1 9 4 9.500h133" stroke={DARK} strokeWidth="1.800" />
        </svg>
      </div>
      <Heatmap />
      <div className="mt-[34px] flex">
        <p className="w-[113px] shrink-0 whitespace-nowrap leading-[18px]">Colors shows<br />data, neuron and<br />weight values.</p>
        <svg width="165" height="54" viewBox="1405 919 165 54" className="font-['Liberation_Sans',sans-serif]">
          <defs>
            <linearGradient id="scale">
              <stop offset="0" stopColor={TAN} /><stop offset="0.280" stopColor={TAN} /><stop offset="0.500" stopColor={PALE} />
              <stop offset="0.740" stopColor={BLUE} /><stop offset="0.840" stopColor={BLUE} /><stop offset="1" stopColor="#45677a" />
            </linearGradient>
          </defs>
          <rect x="1411" y="931" width="147" height="11" fill="url(#scale)" />
          <path d="M1411.500 942v5M1484.500 942v6M1557.500 942v6" stroke={BLUE} />
          <g fontSize="10" textAnchor="middle" fill="#948f7c"><text x="1411" y="960">-1</text><text x="1484.500" y="960">0</text><text x="1557.500" y="960">1</text></g>
        </svg>
      </div>
      <div className="-ml-px mt-[24px] flex h-[17px] items-center whitespace-nowrap tracking-[0.050px]">
        <span className="h-[17px] w-[17px] rounded-[2px] border-2 border-[#5d7f90]" />
        <span className="ml-[8px] w-[110px]">Show test data</span>
        <span className="h-[17px] w-[17px] rounded-[2px] border-2 border-[#28414b]" />
        <span className="ml-[7px]">Discretize output</span>
      </div>
    </div>
  );
}

/* ---------- desktop ---------- */

function Preview() {
  return (
    <div className={"absolute left-[197px] top-[905px] flex h-[152px] w-[221px] flex-col border border-[#82a9c0] bg-[#2d4853] px-[9px] " + UI}>
      <div className="flex h-[36px] items-center pb-[3px]">
        <svg width="18" height="18" viewBox="0 0 18 18">
          <circle cx="11" cy="9" r="5" fill="none" stroke={TAN} strokeWidth="3" strokeDasharray="1 1.500" />
          <path d="M1 8h5M3 6v5M9 7h5" stroke={TAN} strokeWidth="1.500" />
        </svg>
        <span className="ml-[6px] whitespace-nowrap text-[12.400px] text-[#c2bba2]">神经网络.pptx - PowerPoint</span>
      </div>
      <svg width="201" height="105" viewBox="207 942 201 105">
        <rect x="207" y="942" width="201" height="105" fill={PALE} />
        <path d="M289 942h38" stroke={TAN} strokeWidth="4" />
        <path d="M207 956.500h201M225 957v88M229 957v88M233 957v88M237 957v88M396 957v88M400 957v88M404 957v88" stroke={TAN} strokeWidth="1" strokeDasharray="1 2" />
        <path d="M213 948h70M213 952h50M305 948h50M315 952h38" stroke={TAN} strokeWidth="1.500" strokeDasharray="1 4" />
        <path d="M323 946v8M333 946v8M343 946v8M350 946v8" stroke={BLUE} strokeDasharray="1 1.500" />
        <path d="M211 960h12" stroke={BLUE} strokeWidth="4" />
        <path d="M248 967h19" stroke={DARK} strokeWidth="3" />
        <path d="M248 974h41" stroke={DARK} strokeWidth="2" />
        <path d="M248 972.500h41" stroke={TAN} />
        <path d="M211 1001h12M211 1008h12M211 990h8M211 970h8" stroke={TAN} strokeDasharray="2 1" />
        <g stroke={TAN} fill="none" strokeDasharray="2 2">
          <path d="M280 986h12M302 986h5M315 986h65M343 989h40M283 1000h8l15-6M282 1013h4M283 1027l10-4 15-8M298 1004l14 20 10 8M300 990l16 22M335 1008h22M338 1014h17M331 1022h28M331 1026h16M378 1023h12" strokeWidth="1.500" />
        </g>
        <path d="M313 987v36M328 993l10 12M325 986h8M284 1000v2M284 1026h3M341 1022h8" stroke={BLUE} strokeWidth="3" strokeDasharray="2 5" />
        <path d="M313 1021v3M340 1022h2M347 1023h2" stroke={DARK} strokeWidth="2" />
      </svg>
    </div>
  );
}

function Taskbar() {
  return (
    <footer className="flex h-[24px] shrink-0 border-t border-[#d4bc94] bg-[#28414b]">
      <svg width="400" height="23" viewBox="0 1057 400 23" className="shrink-0" fill="none">
        <path d="M2 1070l6-1v8H2zM9 1069l9-1v9H9zM2 1078h6v2H2zM9 1078h9v2H9z" fill={PALE} />
        <circle cx="61" cy="1075" r="5.500" stroke={PALE} strokeWidth="1.200" strokeDasharray="3 1" />
        <circle cx="107.500" cy="1078" r="7" stroke={PALE} strokeWidth="2" />
        <path d="M149 1070v10M158 1070v10M149 1074h9" stroke={BLUE} strokeWidth="1.500" />
        <path d="M162 1072v4M162 1078v2" stroke={PALE} strokeWidth="2" />
        <circle cx="209" cy="1079" r="10" fill={TAN} />
        <circle cx="207" cy="1080" r="6" fill={BLUE} />
        <path d="M193 1068l4 8M226 1067l-4 6" stroke={BLUE} strokeDasharray="1 2" />
        <path d="M249 1080v-12h18v12" stroke={PALE} strokeWidth="1.800" />
        <path d="M249 1069h14" stroke={BLUE} strokeWidth="2" />
        <text x="252" y="1079" fontSize="9" fill={PALE} className="font-['Liberation_Sans',sans-serif]">PC</text>
        <ellipse cx="312" cy="1073" rx="7" ry="6" fill={TAN} />
        <circle cx="301" cy="1076" r="4" stroke={TAN} strokeWidth="2" />
        <circle cx="357" cy="1077" r="10.500" stroke={TAN} strokeWidth="1.200" strokeDasharray="3 1" />
        <path d="M351 1073h4M360 1073h4M354 1079q3-3 6 0" stroke={BLUE} />
      </svg>
      <svg width="310" height="23" viewBox="1610 1057 310 23" className="ml-auto" fill="none">
        <path d="M1625.500 1078l4.500-4.500 4.500 4.500" stroke={TAN} strokeWidth="1.200" />
        <path d="M1650 1069h7v10h-7zM1648 1078h11v1.500h-11z" fill={PALE} />
        <path d="M1670 1071.500h16.500v8M1675 1079h10" stroke={PALE} strokeWidth="1.200" />
        <path d="M1670 1071h5v6h-5z" fill={BLUE} />
        <path d="M1695 1075v4M1698 1073l3-2v8M1704 1074v5" stroke={TAN} strokeWidth="1.400" />
        <path d="M1725 1079h5M1730 1077q1-6 6-7-1 5-5 8" stroke={PALE} strokeWidth="1.500" strokeDasharray="3 1" />
        <rect x="1752" y="1072.500" width="12" height="8" stroke={TAN} strokeWidth="1.200" strokeDasharray="3 1" />
        <path d="M1755 1076h6M1758 1074v5" stroke={BLUE} />
        <path d="M1780 1075l6-2 6-3-2 4 5-1-2 5-4 2h-6z" fill={PALE} />
        <text x="1828.500" y="1072" fontSize="11.500" fill="#d9dccf" className="font-['Noto_Sans',sans-serif]">15:26</text>
        <path d="M1893 1080v-10.500h15.500v10.500" stroke={PALE} strokeWidth="1.200" />
      </svg>
    </footer>
  );
}

export default function App() {
  return (
    <div className="relative h-[1080px] w-[1920px] overflow-hidden bg-[#28414b] font-['Liberation_Sans',sans-serif] text-[#a39b86]">
      <div className="flex h-[1056px] flex-col border-x-2 border-[#28414b] bg-[#f5f7f6]">
        <Browser />
        <Banner />
        <main className="flex grow flex-col pl-[331px] pt-[22px]">
          <div className="-ml-[3px]"><Controls /></div>
          <div className="mt-[64px] flex">
            <DataColumn />
            <Network />
            <OutputColumn />
          </div>
        </main>
      </div>
      <Taskbar />
      <SiteLogo />
      <div className="absolute left-[1169px] top-[477px] whitespace-nowrap font-['Noto_Sans','Noto_Sans_CJK_SC',sans-serif] text-[27px] leading-[40px] text-[#3c5158] [text-shadow:1px_1px_0_#d4bc94]">
        IT自学网<span className="tracking-[1.720px]">:codestudy365.com </span>站长<span className="tracking-[1.500px]">:codape</span>
      </div>
      <div className="absolute right-[1px] top-[499px] flex h-[81px] w-[26px] items-center justify-end border border-[#28414b] bg-[#f5f7f6] pr-[4px]">
        <svg width="13" height="15" viewBox="0 0 13 15"><path d="M13 0v15L0 7.500z" fill="#45677a" /></svg>
      </div>
      <Preview />
      <svg width="13" height="18" viewBox="0 0 13 18" className="absolute left-[315px] top-[1055px]"><path d="M0 0l11 11H7l2 5-3 1-2-5-4 3z" fill={PALE} /></svg>
    </div>
  );
}
